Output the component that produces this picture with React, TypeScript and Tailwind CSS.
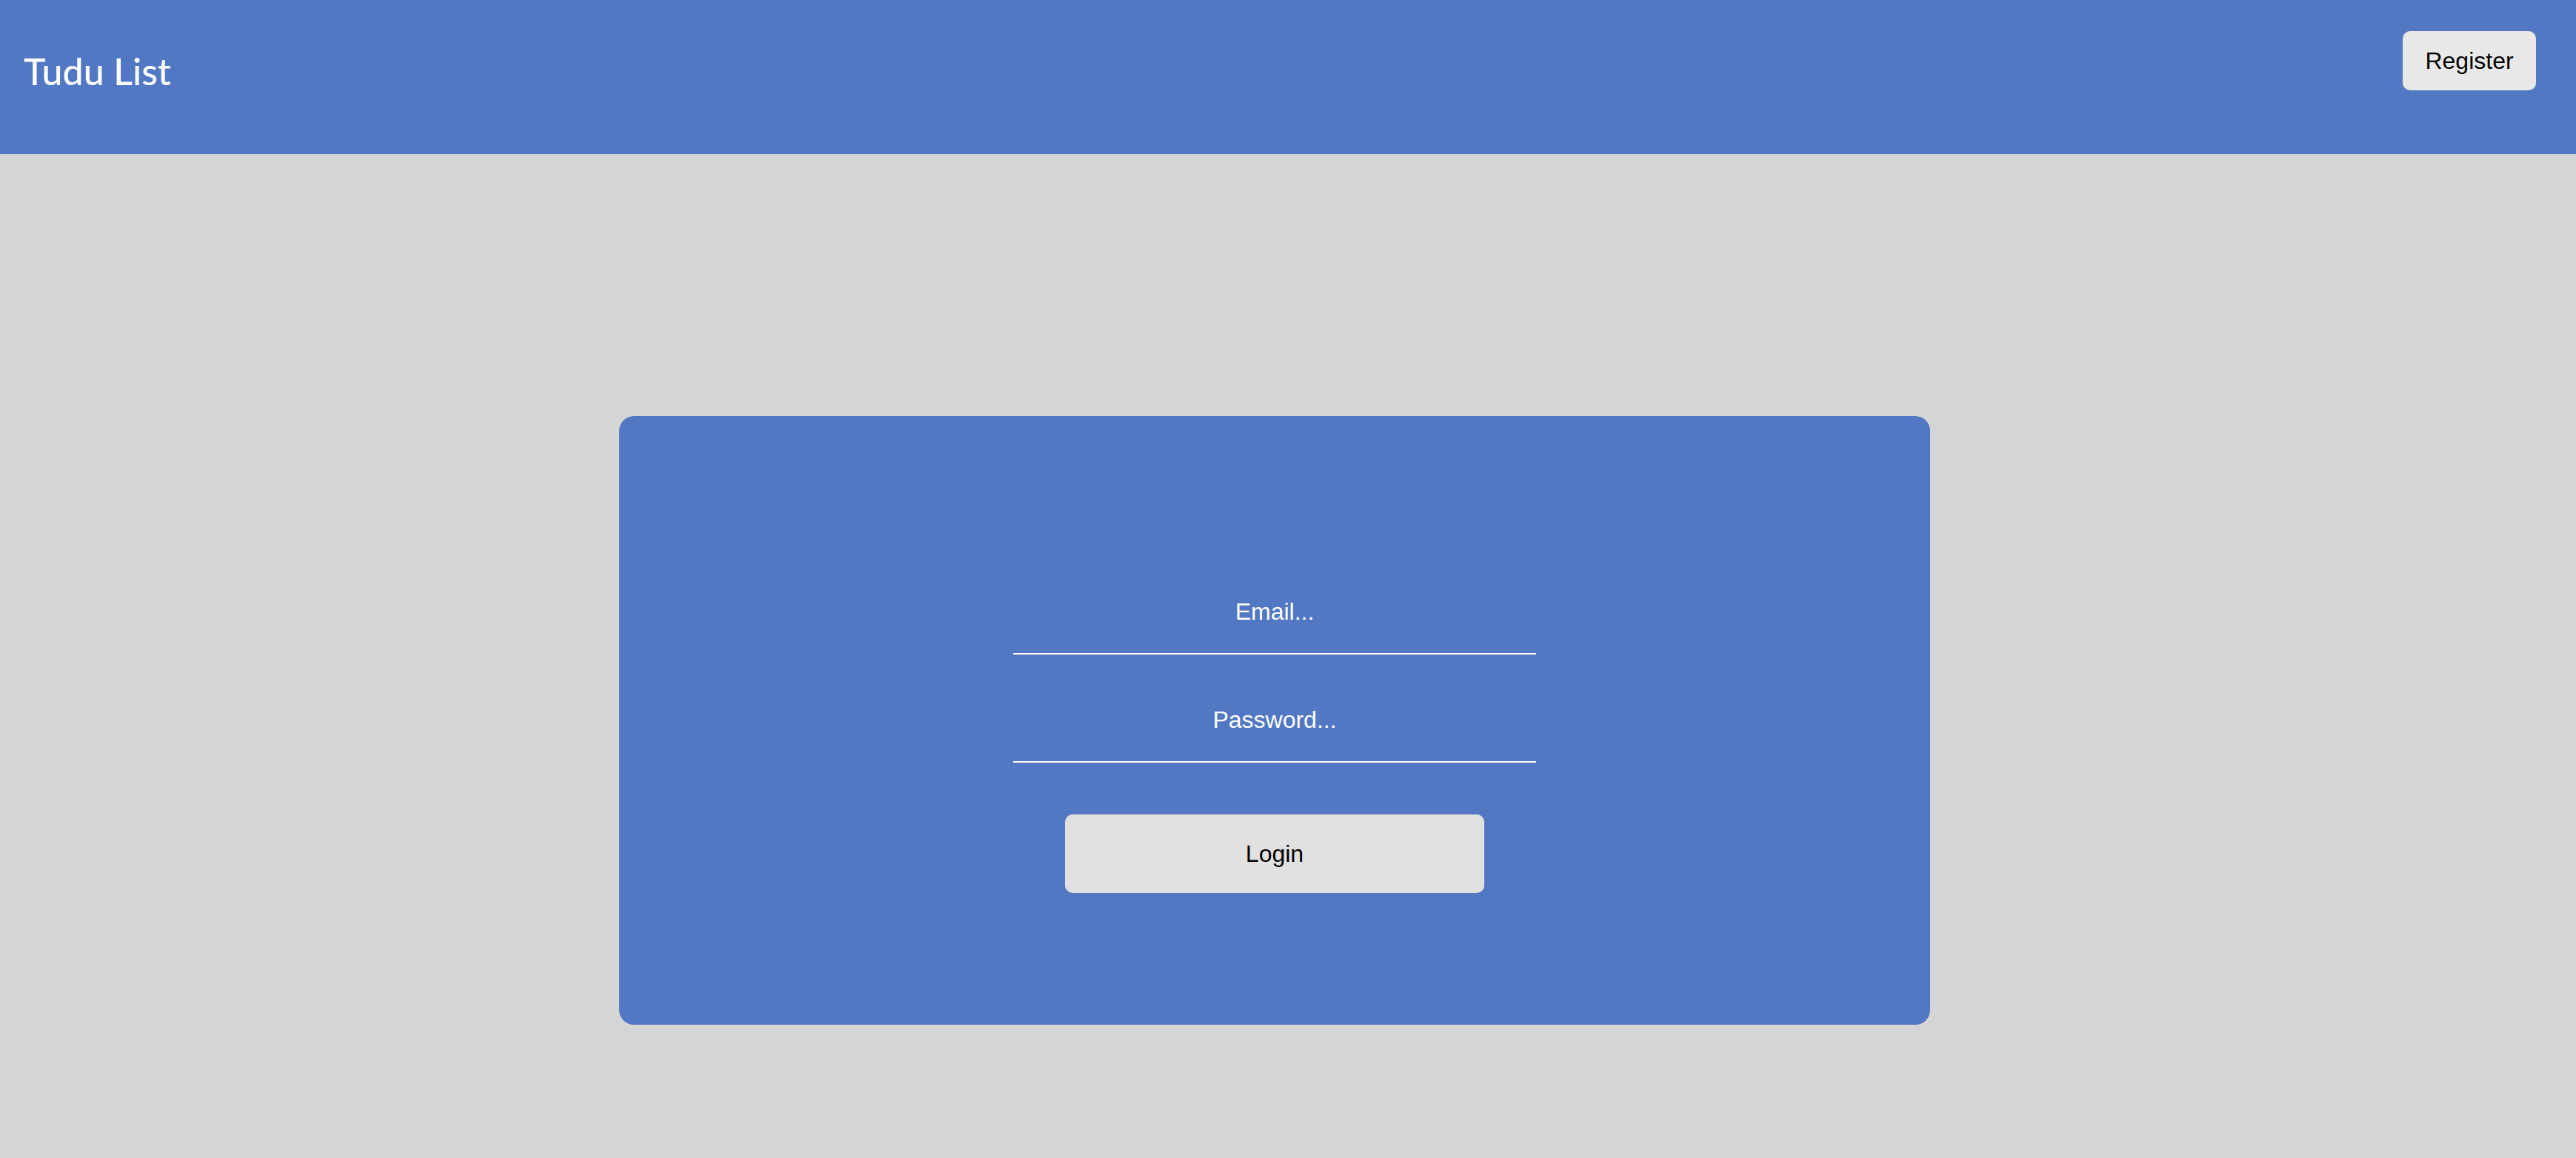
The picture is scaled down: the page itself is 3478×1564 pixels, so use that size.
import { useState } from "react";

const fieldClass =
  "w-full max-w-[706px] border-b-2 border-white bg-transparent py-[38px] text-center text-[32px] leading-9 text-white placeholder:text-white placeholder:opacity-100 focus:outline-none";

function Header() {
  return (
    <header className="flex h-[208px] items-start justify-between bg-[#5278c3] pl-8 pr-[54px]">
      <h1 className="pt-[66px] font-[Papyrus,Lato,'Noto_Sans',sans-serif] text-[50px] font-medium leading-[60px] text-white">
        Tudu List
      </h1>
      <button
        type="button"
        className="mt-[42px] min-w-[180px] rounded-[10px] bg-[#e8e8e8] px-7 py-[22px] text-[32px] leading-9 text-black"
      >
        Register
      </button>
    </header>
  );
}

function LoginForm() {
  const [email, setEmail] = useState("");
  const [password, setPassword] = useState("");

  return (
    <form
      onSubmit={(event) => event.preventDefault()}
      className="flex w-full max-w-[1770px] flex-col items-center rounded-[20px] bg-[#5278c3] pb-[178px] pt-[208px]"
    >
      <input
        type="email"
        aria-label="Email"
        placeholder="Email..."
        value={email}
        onChange={(event) => setEmail(event.target.value)}
        className={fieldClass}
      />
      <input
        type="password"
        aria-label="Password"
        placeholder="Password..."
        value={password}
        onChange={(event) => setPassword(event.target.value)}
        className={`${fieldClass} mt-8`}
      />
      <button
        type="submit"
        className="mt-[70px] w-full max-w-[566px] rounded-[10px] bg-[#e1e1e1] py-[35px] text-[32px] leading-9 text-black"
      >
        Login
      </button>
    </form>
  );
}

export default function App() {
  return (
    <div className="min-h-screen bg-[#d5d5d5] font-['Liberation_Sans',Arial,sans-serif]">
      <Header />
      <main className="flex justify-center pb-[180px] pr-9 pt-[354px]">
        <LoginForm />
      </main>
    </div>
  );
}
